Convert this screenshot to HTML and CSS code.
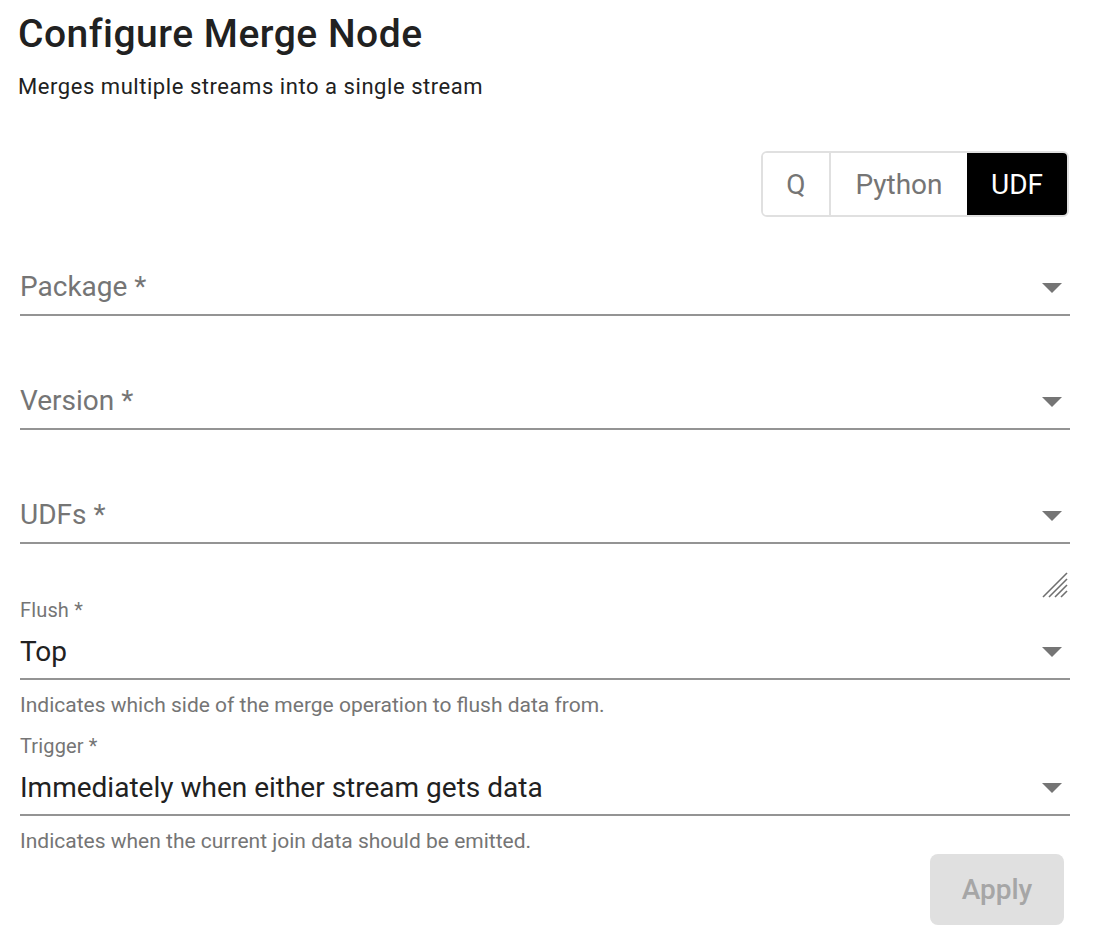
FILE: index.html
```html
<!DOCTYPE html>
<html lang="en">
<head>
<meta charset="utf-8">
<title>Configure Merge Node</title>
<link rel="stylesheet" href="styles.css">
</head>
<body>
<div class="page">
  <h1 class="title">Configure Merge Node</h1>
  <p class="subtitle">Merges multiple streams into a single stream</p>

  <div class="toggle-row">
    <div class="toggle">
      <button class="seg seg-q">Q</button>
      <button class="seg seg-py">Python</button>
      <button class="seg seg-udf active">UDF</button>
    </div>
  </div>

  <div class="fields">
    <div class="field empty">
      <span class="placeholder">Package *</span>
      <svg class="arrow" width="20" height="10" viewBox="0 0 20 10"><path d="M0 0H20L10 10Z"/></svg>
    </div>
    <div class="field empty">
      <span class="placeholder">Version *</span>
      <svg class="arrow" width="20" height="10" viewBox="0 0 20 10"><path d="M0 0H20L10 10Z"/></svg>
    </div>
    <div class="field empty">
      <span class="placeholder">UDFs *</span>
      <svg class="arrow" width="20" height="10" viewBox="0 0 20 10"><path d="M0 0H20L10 10Z"/></svg>
    </div>
  </div>

  <div class="grip-row">
    <svg class="grip" width="26" height="26" viewBox="0 0 26 26">
      <g stroke="#6f6f6f" stroke-width="1.6" stroke-linecap="butt" fill="none">
        <line x1="1" y1="25" x2="25" y2="1"/>
        <line x1="7" y1="25" x2="25" y2="7"/>
        <line x1="13" y1="25" x2="25" y2="13"/>
        <line x1="19" y1="25" x2="25" y2="19"/>
      </g>
    </svg>
  </div>

  <div class="select-block">
    <div class="label">Flush *</div>
    <div class="field filled">
      <span class="value">Top</span>
      <svg class="arrow" width="20" height="10" viewBox="0 0 20 10"><path d="M0 0H20L10 10Z"/></svg>
    </div>
    <div class="helper">Indicates which side of the merge operation to flush data from.</div>
  </div>

  <div class="select-block second">
    <div class="label">Trigger *</div>
    <div class="field filled">
      <span class="value">Immediately when either stream gets data</span>
      <svg class="arrow" width="20" height="10" viewBox="0 0 20 10"><path d="M0 0H20L10 10Z"/></svg>
    </div>
    <div class="helper">Indicates when the current join data should be emitted.</div>
  </div>

  <div class="actions">
    <button class="apply" disabled>Apply</button>
  </div>
</div>
</body>
</html>
```

FILE: styles.css
```css
* { box-sizing: border-box; }
html, body {
  margin: 0;
  padding: 0;
  background: #ffffff;
}
body {
  font-family: Roboto, "Liberation Sans", Arial, sans-serif;
  color: #212121;
}
.page {
  width: 1094px;
  padding: 0 24px 0 20px;
}
.title {
  margin: 12px 0 0 -2px;
  font-size: 39px;
  line-height: 44px;
  letter-spacing: 0.5px;
  font-weight: 500;
  color: #212121;
}
.subtitle {
  margin: 18px 0 0 -2px;
  font-size: 22px;
  line-height: 26px;
  letter-spacing: 0.55px;
  color: #212121;
}
.toggle-row {
  display: flex;
  justify-content: flex-end;
  margin-top: 51px;
  margin-right: 1px;
}
.toggle {
  display: flex;
  border: 2px solid #e0e0e0;
  border-radius: 6px;
  overflow: hidden;
  height: 66px;
}
.seg {
  font-family: inherit;
  font-size: 28px;
  color: #757575;
  background: #fff;
  border: 0;
  padding: 0;
  margin: 0;
}
.seg-q { width: 68px; border-right: 2px solid #e0e0e0; }
.seg-py { width: 136px; }
.seg-udf { width: 100px; }
.seg.active { background: #000; color: #fff; }

.fields {
  display: flex;
  flex-direction: column;
  gap: 52px;
  margin-top: 37px;
}
.field {
  display: flex;
  align-items: flex-end;
  justify-content: space-between;
  border-bottom: 2px solid #949494;
}
.field.empty {
  height: 62px;
}
.placeholder {
  font-size: 28px;
  line-height: 32px;
  color: #757575;
  padding-bottom: 11px;
}
.arrow {
  fill: #757575;
  margin: 0 8px 21px 0;
  display: block;
  flex: none;
}

.grip-row {
  display: flex;
  justify-content: flex-end;
  margin-top: 28px;
  margin-right: 2px;
  height: 26px;
}
.grip { display: block; }

.select-block { display: flex; flex-direction: column; }
.label {
  font-size: 20px;
  line-height: 24px;
  letter-spacing: 0.15px;
  color: #757575;
}
.select-block.second { margin-top: 17px; }
.field.filled {
  padding-top: 14px;
}
.value {
  font-size: 28px;
  line-height: 32px;
  color: #212121;
  padding-bottom: 10px;
}
.helper {
  font-size: 21px;
  line-height: 24px;
  color: #757575;
  margin-top: 13px;
}

.actions {
  display: flex;
  justify-content: flex-end;
  margin-top: 1px;
  margin-right: 6px;
}
.apply {
  width: 134px;
  height: 71px;
  border: 0;
  border-radius: 8px;
  background: #e0e0e0;
  color: #a6a6a6;
  font-family: inherit;
  font-size: 28px;
  font-weight: 500;
  padding: 0;
}
```
